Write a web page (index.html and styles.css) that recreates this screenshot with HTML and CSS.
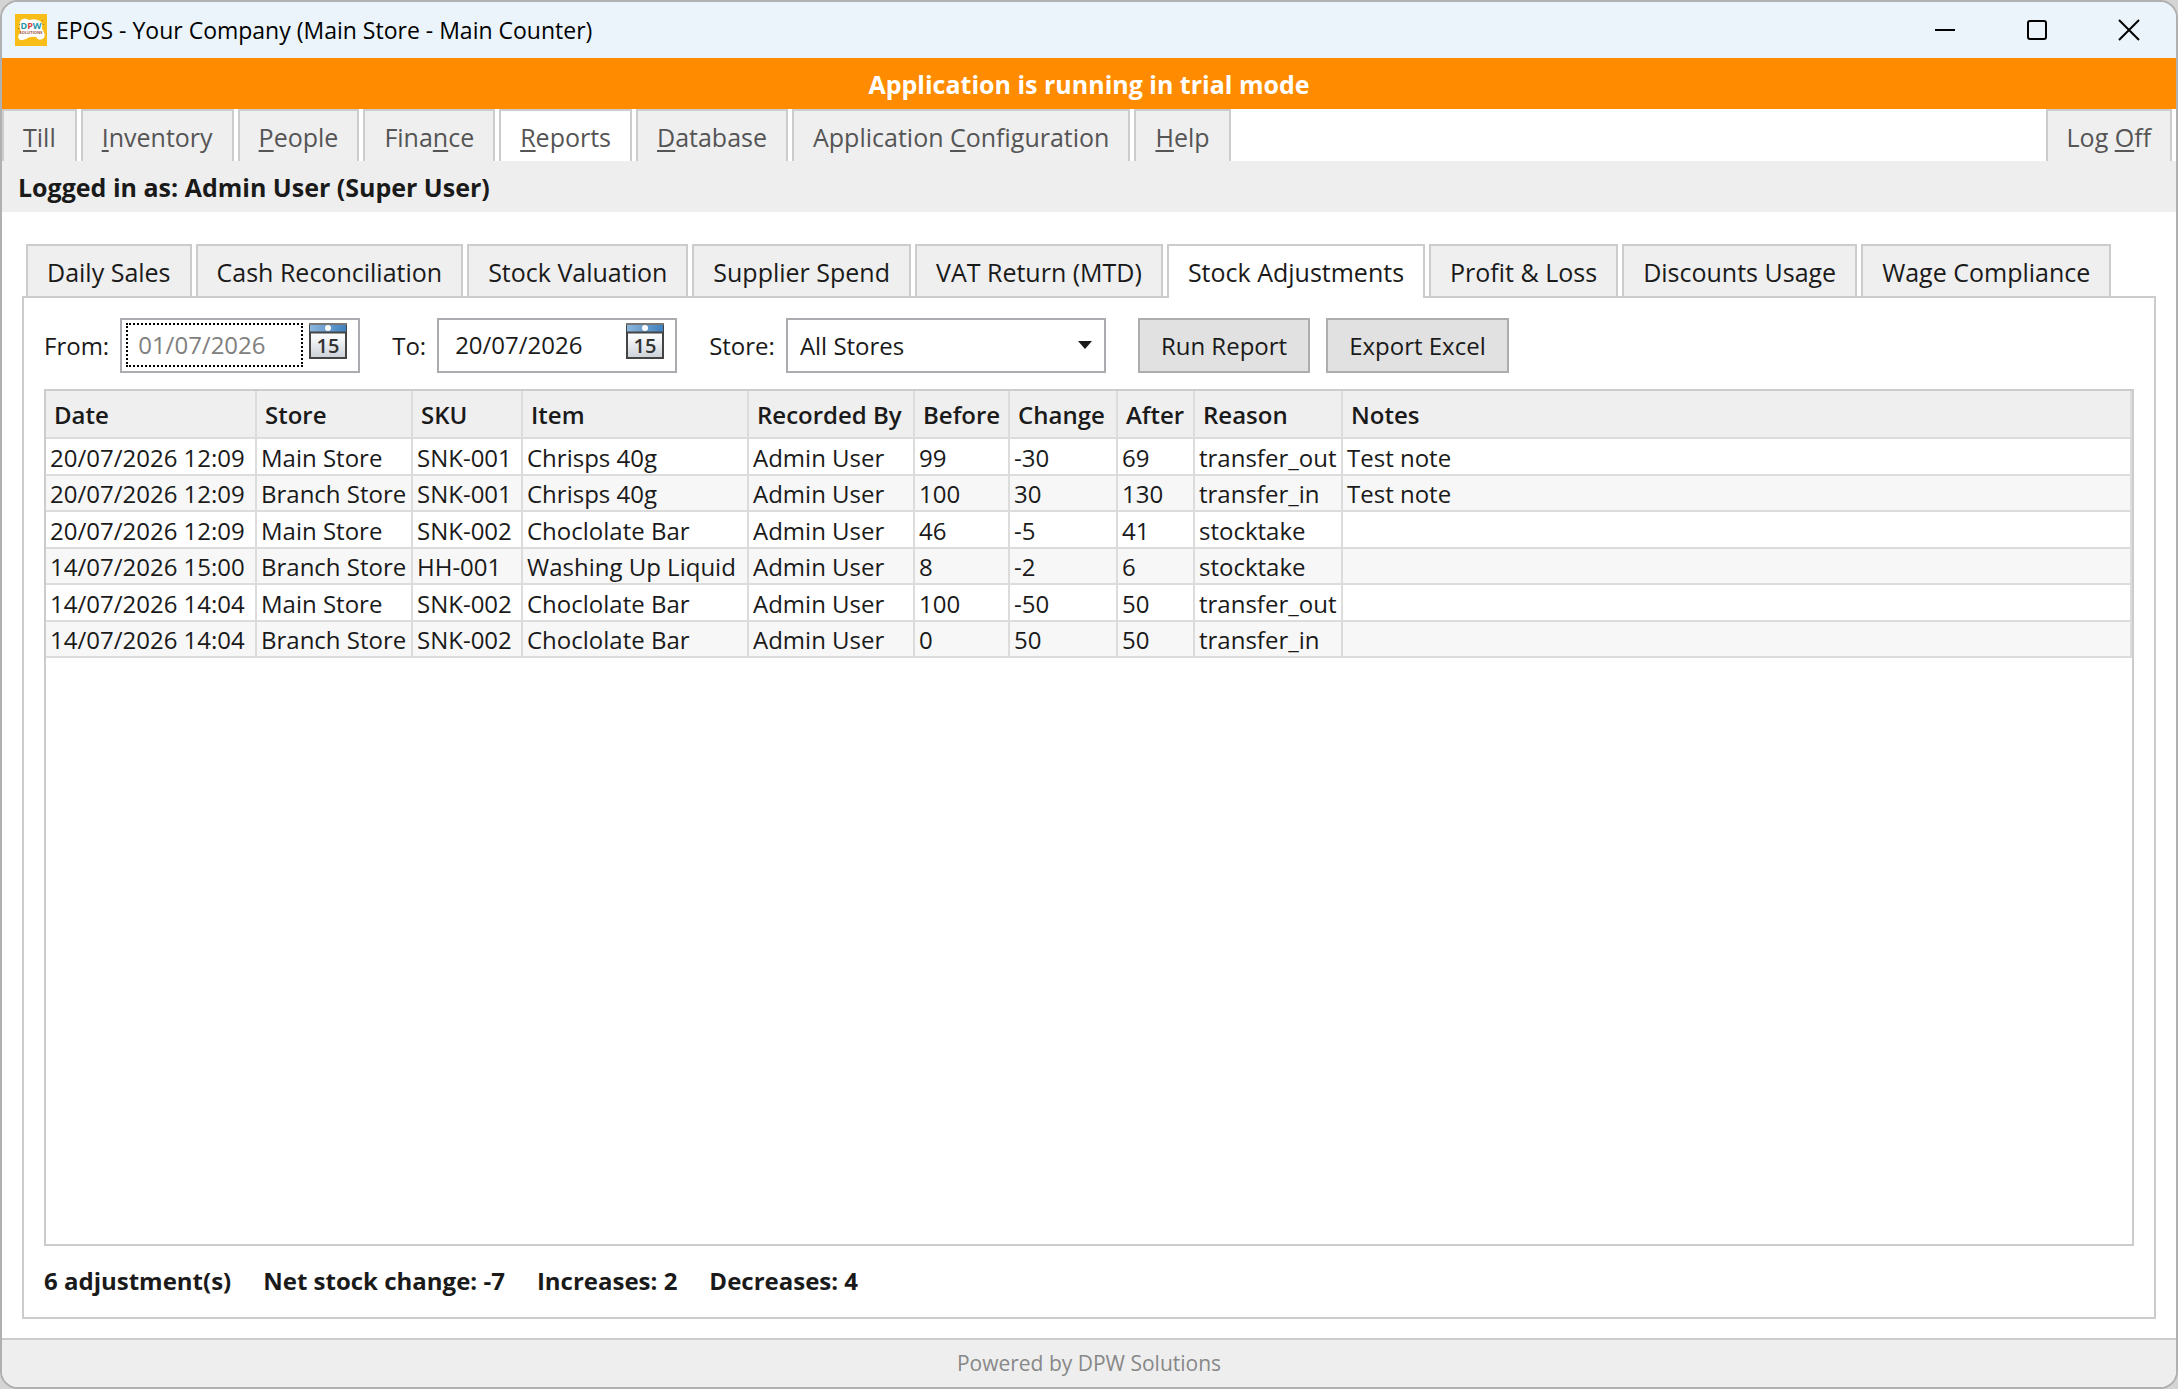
FILE: index.html
```html
<!DOCTYPE html>
<html lang="en">
<head>
  <meta charset="UTF-8">
  <meta name="viewport" content="width=device-width, initial-scale=1.0">
  <title>EPOS - Your Company (Main Store - Main Counter)</title>
  <link rel="stylesheet" href="styles.css">
</head>
<body>
  <svg width="0" height="0" class="defs" aria-hidden="true">
    <defs>
      <linearGradient id="calTop" x1="0" y1="0" x2="1" y2="0">
        <stop offset="0" stop-color="#8db6dc"/><stop offset="1" stop-color="#3f81bf"/>
      </linearGradient>
      <linearGradient id="calPage" x1="0" y1="0" x2="0" y2="1">
        <stop offset="0" stop-color="#fff"/><stop offset=".4" stop-color="#f8f9fa"/><stop offset="1" stop-color="#cbd1d8"/>
      </linearGradient>
      <symbol id="calendar" viewBox="0 0 38 36">
        <rect x="1" y="1" width="36" height="34" fill="url(#calPage)" stroke="#444" stroke-width="2"/>
        <rect x="1" y="1" width="36" height="8" fill="url(#calTop)"/>
        <path d="M0 1h38" stroke="#777" stroke-width="2"/>
        <path d="M0 9.5h38" stroke="#444" stroke-width="2"/>
        <circle cx="19" cy="5" r="3" fill="#fff"/>
        <text x="19" y="30" text-anchor="middle">15</text>
      </symbol>
    </defs>
  </svg>

  <div class="window">
    <header class="titlebar">
      <svg class="logo" viewBox="0 0 32 32" aria-hidden="true">
        <rect width="32" height="32" fill="#f9bd17"/>
        <path d="M6 6Q10 3 14 6Q20 4 25 7Q28 9 27 15Q31 20 29 24Q24 28 21 23Q15 22 11 25Q4 28 3 23Q3 20 6 18Q3 10 6 6Z" fill="#fff"/>
        <path d="M4 10l1 1M3 14l1 1M27 6l1 1M28 10l1 1" stroke="#8c7b3d"/>
        <text x="16" y="15" text-anchor="middle" class="logo-main"><tspan fill="#2596a6">D</tspan><tspan fill="#d8453d">P</tspan><tspan fill="#2596a6">W</tspan></text>
        <text x="16" y="20" text-anchor="middle" class="logo-sub">SOLUTIONS</text>
      </svg>
      <h1>EPOS - Your Company (Main Store - Main Counter)</h1>
      <div class="win-buttons">
        <button type="button" aria-label="Minimise"><svg viewBox="0 0 20 20"><path d="M0 10h20"/></svg></button>
        <button type="button" aria-label="Maximise"><svg viewBox="0 0 20 20"><rect x="1" y="1" width="18" height="18" rx="2"/></svg></button>
        <button type="button" aria-label="Close"><svg viewBox="0 0 20 20"><path d="M0 0l20 20M20 0L0 20"/></svg></button>
      </div>
    </header>

    <div class="trial">Application is running in trial mode</div>

    <nav class="tabs menu">
      <button type="button"><u>T</u>ill</button>
      <button type="button"><u>I</u>nventory</button>
      <button type="button"><u>P</u>eople</button>
      <button type="button">Fina<u>n</u>ce</button>
      <button type="button" class="active"><u>R</u>eports</button>
      <button type="button"><u>D</u>atabase</button>
      <button type="button">Application <u>C</u>onfiguration</button>
      <button type="button"><u>H</u>elp</button>
      <button type="button" class="logoff">Log <u>O</u>ff</button>
    </nav>

    <div class="user">Logged in as: Admin User (Super User)</div>

    <main>
      <nav class="tabs reports">
        <button type="button">Daily Sales</button>
        <button type="button">Cash Reconciliation</button>
        <button type="button">Stock Valuation</button>
        <button type="button">Supplier Spend</button>
        <button type="button">VAT Return (MTD)</button>
        <button type="button" class="active">Stock Adjustments</button>
        <button type="button">Profit &amp; Loss</button>
        <button type="button">Discounts Usage</button>
        <button type="button">Wage Compliance</button>
      </nav>

      <section class="panel">
        <form class="filters">
          <label for="from">From:</label>
          <div class="date focused">
            <input type="text" id="from" value="01/07/2026">
            <button type="button" aria-label="Choose from date"><svg><use href="#calendar"/></svg></button>
          </div>
          <label for="to">To:</label>
          <div class="date">
            <input type="text" id="to" value="20/07/2026">
            <button type="button" aria-label="Choose to date"><svg><use href="#calendar"/></svg></button>
          </div>
          <label for="store">Store:</label>
          <div class="select">
            <select id="store"><option>All Stores</option></select>
            <svg viewBox="0 0 14 8" aria-hidden="true"><path d="M0 0h14L7 8z"/></svg>
          </div>
          <button type="button" class="btn run">Run Report</button>
          <button type="button" class="btn">Export Excel</button>
        </form>

        <div class="grid">
          <table>
            <colgroup>
              <col class="c-date"><col class="c-store"><col class="c-sku"><col class="c-item"><col class="c-by">
              <col class="c-before"><col class="c-change"><col class="c-after"><col class="c-reason"><col>
            </colgroup>
            <thead>
              <tr><th>Date</th><th>Store</th><th>SKU</th><th>Item</th><th>Recorded By</th><th>Before</th><th>Change</th><th>After</th><th>Reason</th><th>Notes</th></tr>
            </thead>
            <tbody>
              <tr><td>20/07/2026 12:09</td><td>Main Store</td><td>SNK-001</td><td>Chrisps 40g</td><td>Admin User</td><td>99</td><td>-30</td><td>69</td><td>transfer_out</td><td>Test note</td></tr>
              <tr><td>20/07/2026 12:09</td><td>Branch Store</td><td>SNK-001</td><td>Chrisps 40g</td><td>Admin User</td><td>100</td><td>30</td><td>130</td><td>transfer_in</td><td>Test note</td></tr>
              <tr><td>20/07/2026 12:09</td><td>Main Store</td><td>SNK-002</td><td>Choclolate Bar</td><td>Admin User</td><td>46</td><td>-5</td><td>41</td><td>stocktake</td><td></td></tr>
              <tr><td>14/07/2026 15:00</td><td>Branch Store</td><td>HH-001</td><td>Washing Up Liquid</td><td>Admin User</td><td>8</td><td>-2</td><td>6</td><td>stocktake</td><td></td></tr>
              <tr><td>14/07/2026 14:04</td><td>Main Store</td><td>SNK-002</td><td>Choclolate Bar</td><td>Admin User</td><td>100</td><td>-50</td><td>50</td><td>transfer_out</td><td></td></tr>
              <tr><td>14/07/2026 14:04</td><td>Branch Store</td><td>SNK-002</td><td>Choclolate Bar</td><td>Admin User</td><td>0</td><td>50</td><td>50</td><td>transfer_in</td><td></td></tr>
            </tbody>
          </table>
        </div>

        <div class="totals">
          <span>6 adjustment(s)</span>
          <span>Net stock change: -7</span>
          <span>Increases: 2</span>
          <span>Decreases: 4</span>
        </div>
      </section>
    </main>

    <footer>Powered by DPW Solutions</footer>
  </div>
</body>
</html>
```
FILE: styles.css
```css
:root {
  --line: #ccc; --cell: #dcdcdc; --bar: #eee; --tab: #efefef;
  --field: #acacb0; --text: #1a1a1a; --muted: #555;
}
*{box-sizing:border-box;margin:0;padding:0;}
body{background:#d4d4d4;color:var(--text);font:24px/32px "Open Sans","Noto Sans",sans-serif;}
button,input,select{font:inherit;color:inherit;border-radius:0;}
.defs{position:absolute;}
.defs text{font:600 20px "Open Sans",sans-serif;fill:#333;}

.window{display:flex;flex-direction:column;min-height:100vh;background:#fff;border:2px solid #b0b0b0;border-radius:18px;overflow:hidden;}
.titlebar{display:flex;align-items:center;height:56px;padding:0 1px 0 13px;background:#ebf4fb;color:#000;}
.titlebar h1{font-size:23px;font-weight:400;margin-left:9px;}
.logo{width:32px;height:32px;}
.logo-main{font:bold 9px "Open Sans",sans-serif;}
.logo-sub{font:bold 4px "Open Sans",sans-serif;fill:#a2553c;}
.win-buttons{display:flex;margin-left:auto;}
.win-buttons button{width:92px;height:56px;border:none;background:none;}
.win-buttons svg{width:20px;height:20px;display:block;margin:auto;fill:none;stroke:#000;stroke-width:2;overflow:visible;}

.trial{background:#ff8c00;color:#fff;font-size:25px;font-weight:700;text-align:center;height:51px;line-height:53px;}

.tabs{display:flex;gap:4px;font-size:25px;}
.tabs button{height:52px;padding:2px 19px 0;border:2px solid var(--line);border-bottom:none;background:var(--tab);white-space:nowrap;}
.tabs .active{background:#fff;}
.menu{color:var(--muted);padding-right:4px;}
.menu u{text-underline-offset:3px;text-decoration-thickness:2px;}
.menu .logoff{margin-left:auto;}

.user{background:var(--bar);font-size:25px;font-weight:700;height:51px;line-height:53px;padding-left:16px;}

main{flex:1;display:flex;flex-direction:column;padding:32px 20px 19px;}
.reports{padding-left:4px;}
.reports .active{height:54px;margin-bottom:-2px;padding-bottom:2px;position:relative;}
.panel{flex:1;display:flex;flex-direction:column;border:2px solid var(--line);padding:20px;}

.filters{display:flex;align-items:center;height:55px;}
.filters label{margin-right:11px;}
.date{display:flex;width:240px;height:55px;border:2px solid var(--field);margin-right:32px;padding:3px 4px;}
.date input{width:177px;height:44px;border:none;padding:0 0 2px 12px;outline:none;background:none;}
.date.focused input{border:2px dotted #000;padding-left:10px;color:#808080;}
.date button{width:38px;height:36px;margin-left:6px;border:none;background:none;}
.date svg{display:block;width:38px;height:36px;}
.select{position:relative;width:320px;height:55px;margin-right:32px;}
.select select{appearance:none;width:100%;height:100%;border:2px solid var(--field);background:#fff;padding:0 12px;}
.select svg{position:absolute;right:14px;top:23px;width:14px;height:8px;fill:var(--text);pointer-events:none;}
.btn{height:55px;padding:0 21px;background:#e1e1e1;border:2px solid #adadad;white-space:nowrap;}
.btn.run{margin-right:16px;}

.grid{flex:1;border:2px solid var(--line);margin-top:16px;}
table{width:100%;table-layout:fixed;border-collapse:separate;border-spacing:0;}
th,td{border-right:2px solid var(--cell);border-bottom:2px solid var(--cell);text-align:left;white-space:nowrap;line-height:32px;padding-top:2px;}
th{height:48px;padding-left:8px;background:var(--tab);font-weight:600;}
td{height:36px;padding-left:4px;}
tbody tr:nth-child(odd) td{height:37px;}
tbody tr:nth-child(even) td{background:#f7f7f7;}
.c-date{width:211px;} .c-store{width:156px;} .c-sku{width:110px;} .c-item{width:226px;} .c-by{width:166px;}
.c-before{width:95px;} .c-change{width:108px;} .c-after{width:77px;} .c-reason{width:148px;}

.totals{display:flex;gap:32px;font-weight:700;margin-top:19px;}
footer{border-top:2px solid var(--line);background:var(--bar);color:#888;font-size:21px;text-align:center;line-height:47px;}
```
